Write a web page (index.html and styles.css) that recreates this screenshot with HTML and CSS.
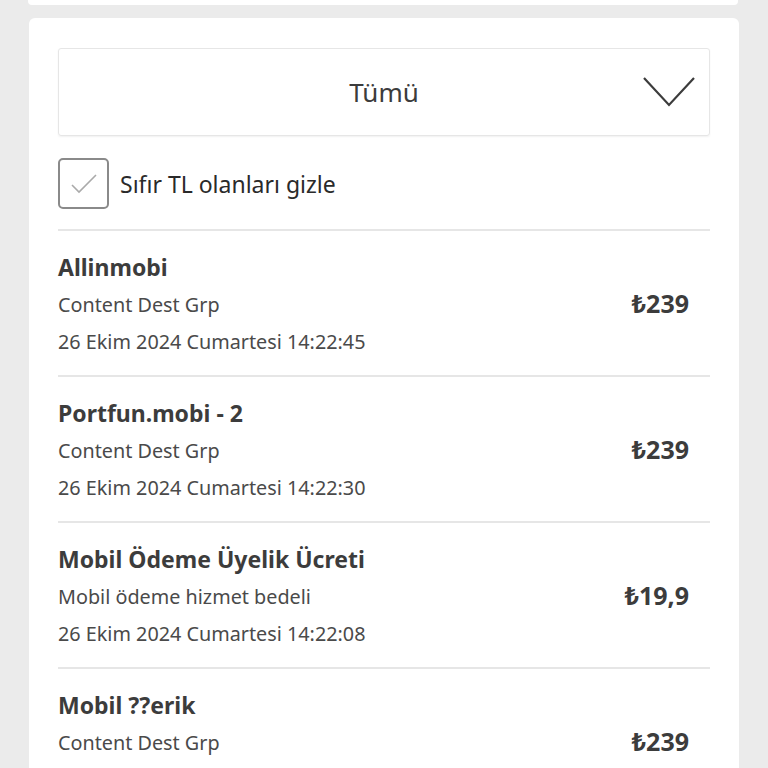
FILE: index.html
```html
<!DOCTYPE html>
<html>
<head>
    <title>İşlemler</title>
    <link rel="stylesheet" href="styles.css">
</head>
<body>
    <div class="top-card"></div>
    <div class="card">
        <div class="select-box">
            <span class="select-label">Tümü</span>
            <svg class="chevron" width="52" height="30" viewBox="0 0 52 30" fill="none" stroke="#3c3c3c" stroke-width="2.2">
                <path d="M1 1L26 28L51 1" stroke-linejoin="miter"/>
            </svg>
        </div>
        <label class="check-row">
            <span class="check-box">
                <svg width="28" height="22" viewBox="0 0 28 22" fill="none" stroke="#aaaaaa" stroke-width="1.6">
                    <path d="M2 12L9 19L26 2"/>
                </svg>
            </span>
            <span class="check-label">Sıfır TL olanları gizle</span>
        </label>

        <div class="list">
            <div class="item">
                <div class="item-info">
                    <div class="item-title">Allinmobi</div>
                    <div class="item-sub">Content Dest Grp</div>
                    <div class="item-sub">26 Ekim 2024 Cumartesi 14:22:45</div>
                </div>
                <div class="item-price">₺239</div>
            </div>
            <div class="item">
                <div class="item-info">
                    <div class="item-title">Portfun.mobi - 2</div>
                    <div class="item-sub">Content Dest Grp</div>
                    <div class="item-sub">26 Ekim 2024 Cumartesi 14:22:30</div>
                </div>
                <div class="item-price">₺239</div>
            </div>
            <div class="item">
                <div class="item-info">
                    <div class="item-title">Mobil Ödeme Üyelik Ücreti</div>
                    <div class="item-sub">Mobil ödeme hizmet bedeli</div>
                    <div class="item-sub">26 Ekim 2024 Cumartesi 14:22:08</div>
                </div>
                <div class="item-price">₺19,9</div>
            </div>
            <div class="item">
                <div class="item-info">
                    <div class="item-title">Mobil ??erik</div>
                    <div class="item-sub">Content Dest Grp</div>
                </div>
                <div class="item-price">₺239</div>
            </div>
        </div>
    </div>
</body>
</html>
```

FILE: styles.css
```css
body {
    margin: 0;
    padding: 0;
    background-color: #ebebeb;
    font-family: "Noto Sans", "DejaVu Sans", sans-serif;
    color: #3c3c3c;
    height: 768px;
    overflow: hidden;
}
.top-card {
    height: 5px;
    margin: 0 30px 0 28px;
    background-color: #fff;
    border-radius: 0 0 4px 4px;
}
.card {
    margin: 13px 29px 0 29px;
    padding: 30px 29px 0 29px;
    background-color: #fff;
    border-radius: 6px;
    min-height: 800px;
}
.select-box {
    height: 86px;
    border: 1px solid #e6e6e6;
    border-radius: 3px;
    box-shadow: 0 1px 2px rgba(0,0,0,0.06);
    display: flex;
    align-items: center;
    justify-content: center;
    position: relative;
}
.select-label {
    font-size: 26px;
    color: #3c3c3c;
}
.chevron {
    position: absolute;
    right: 14px;
    top: 28px;
}
.check-row {
    display: flex;
    align-items: center;
    gap: 11px;
    margin-top: 22px;
    margin-bottom: 20px;
}
.check-box {
    width: 47px;
    height: 47px;
    border: 2px solid #8a8a8a;
    border-radius: 5px;
    display: flex;
    align-items: center;
    justify-content: center;
}
.check-label {
    font-size: 23px;
    color: #2a2a2a;
}
.list {
    border-top: 2px solid #e6e6e6;
}
.item {
    display: flex;
    align-items: center;
    min-height: 109px;
    padding: 21px 21px 14px 0;
    border-bottom: 2px solid #e6e6e6;
}
.item-info {
    flex: 1;
    align-self: flex-start;
}
.item-title {
    font-size: 23px;
    font-weight: 700;
    line-height: 30px;
    margin-bottom: 4px;
    color: #3c3c3c;
}
.item-sub {
    font-size: 19.8px;
    line-height: 37px;
    color: #4a4a4a;
}
.item-price {
    font-size: 25px;
    font-weight: 700;
    padding-bottom: 7px;
    color: #3c3c3c;
}
```
